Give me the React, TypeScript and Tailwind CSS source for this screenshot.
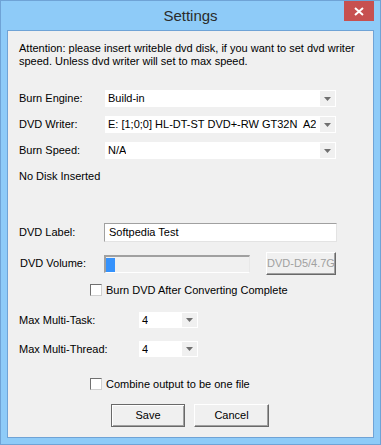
const font = "font-['Liberation_Sans',Arial,sans-serif]"

function Combo({ value, width, height }: { value: string; width: string; height: string }) {
  return (
    <div className={`flex items-center justify-between bg-white ${width} ${height}`}>
      <span className="pl-[3px] text-[11px] text-black whitespace-pre overflow-hidden">{value}</span>
      <div className="flex items-center justify-center w-[15px] h-[calc(100%-2px)] mr-[1px] bg-[#f0f0f0] shrink-0">
        <svg width="7" height="4" viewBox="0 0 7 4">
          <path d="M0 0h7L3.5 4z" fill="#707070" />
        </svg>
      </div>
    </div>
  )
}

function Check({ label }: { label: string }) {
  return (
    <div className="flex items-center h-[12px] pl-[82px]">
      <div className="w-[12px] h-[12px] bg-white border border-[#707070] border-r-[#d0d0d0] border-b-[#d0d0d0]" />
      <span className="ml-[4px] text-[11px] leading-none text-black whitespace-nowrap">{label}</span>
    </div>
  )
}

export default function App() {
  const rows = [
    { label: "Burn Engine:", value: "Build-in" },
    { label: "DVD Writer:", value: "E: [1;0;0] HL-DT-ST DVD+-RW GT32N  A2" },
    { label: "Burn Speed:", value: "N/A" },
  ]

  return (
    <div className={`w-[381px] h-[445px] bg-[#8ecbf8] border border-[#6fa3d6] ${font}`}>
      {/* title bar */}
      <div className="relative h-[29px] flex items-center justify-center">
        <span className="text-[15px] text-[#2b2b2b] pt-[1px]">Settings</span>
        <div className="absolute right-[6px] top-0 w-[30px] h-[20px] bg-[#c75050] flex items-center justify-center">
          <svg width="10" height="9" viewBox="0 0 10 9">
            <path d="M1 1l8 7M9 1L1 8" stroke="white" strokeWidth="2" />
          </svg>
        </div>
      </div>

      {/* client area */}
      <div className="ml-[6px] w-[367px] h-[408px] border border-[#6fa3d6] bg-[#f0f0f0] text-black text-[11px]">
        <p className="pt-[11px] pl-[11px] pr-[6px] leading-[13px] h-[37px]">
          Attention: please insert writeble dvd disk, if you want to set dvd writer speed. Unless dvd writer will set to max speed.
        </p>

        <div className="mt-[22px] flex flex-col gap-[9px]">
          {rows.map((r) => (
            <div key={r.label} className="flex items-center">
              <span className="w-[97px] pl-[11px]">{r.label}</span>
              <Combo value={r.value} width="w-[231px]" height="h-[17px]" />
            </div>
          ))}
        </div>

        <div className="mt-[10px] pl-[11px] leading-[14px]">No Disk Inserted</div>

        <div className="mt-[40px] flex items-center">
          <span className="w-[96px] pl-[11px]">DVD Label:</span>
          <div className="w-[233px] h-[19px] bg-white border border-[#a0a0a0] border-r-[#e3e3e3] border-b-[#e3e3e3] flex items-center pl-[4px]">
            Softpedia Test
          </div>
        </div>

        <div className="mt-[10px] flex items-center h-[23px]">
          <span className="w-[96px] pl-[12px]">DVD Volume:</span>
          <div className="w-[146px] h-[18px] border-t-2 border-l-2 border-[#a0a0a0] border-r border-b border-r-[#e8e8e8] border-b-white bg-[#f0f0f0] flex pt-[1px]">
            <div className="w-[9px] h-[14px] bg-[#3592fc]" />
          </div>
          <div className="ml-[16px] w-[70px] h-[23px] bg-[#f0f0f0] border border-white border-r-[#696969] border-b-[#696969] shadow-[inset_-1px_-1px_0_#a0a0a0] flex items-center justify-center text-[#a0a0a0] whitespace-nowrap">
            DVD-D5/4.7G
          </div>
        </div>

        <div className="mt-[9px]">
          <Check label="Burn DVD After Converting Complete" />
        </div>

        <div className="mt-[16px] flex flex-col gap-[12px]">
          <div className="flex items-center">
            <span className="w-[131px] pl-[11px]">Max Multi-Task:</span>
            <Combo value="4" width="w-[59px]" height="h-[16px]" />
          </div>
          <div className="flex items-center">
            <span className="w-[131px] pl-[11px]">Max Multi-Thread:</span>
            <Combo value="4" width="w-[59px]" height="h-[16px]" />
          </div>
        </div>

        <div className="mt-[21px]">
          <Check label="Combine output to be one file" />
        </div>

        <div className="mt-[14px] flex gap-[9px] pl-[103px]">
          <div className="w-[74px] h-[23px] bg-[#f0f0f0] border border-[#696969] shadow-[inset_1px_1px_0_white,inset_-1px_-1px_0_#a0a0a0] flex items-center justify-center">
            Save
          </div>
          <div className="w-[75px] h-[23px] bg-[#f0f0f0] border border-white border-r-[#696969] border-b-[#696969] shadow-[inset_-1px_-1px_0_#a0a0a0] flex items-center justify-center">
            Cancel
          </div>
        </div>
      </div>
    </div>
  )
}
